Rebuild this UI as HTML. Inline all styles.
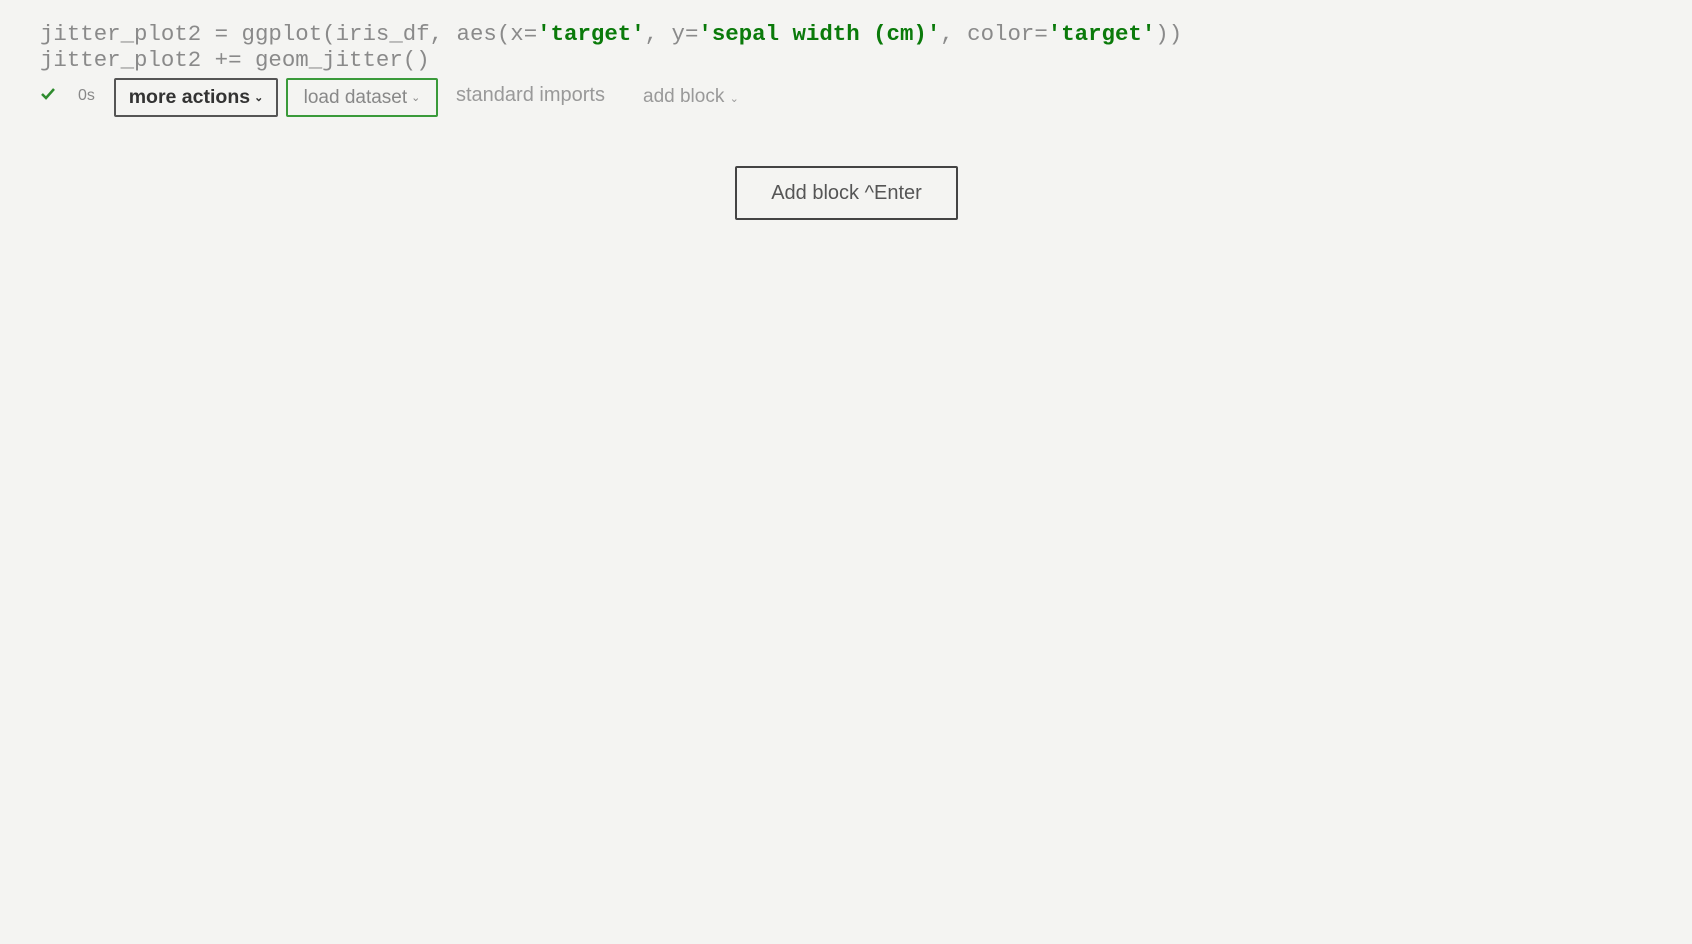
<!DOCTYPE html>
<html><head><meta charset="utf-8"><style>
body{margin:0;width:1692px;height:944px;background:#f4f4f2;position:relative;overflow:hidden;font-family:"Liberation Sans",sans-serif;}
.code{position:absolute;left:40px;top:21px;font-family:"Liberation Mono",monospace;font-size:22.4px;line-height:26px;color:#8a8a8a;white-space:pre;}
.s{color:#0a7a0a;font-weight:bold;}
.ab{position:absolute;box-sizing:border-box;font-size:19px;display:flex;align-items:center;justify-content:center;}
</style></head><body>
<div class="code">jitter_plot2 = ggplot(iris_df, aes(x=<span class="s">'target'</span>, y=<span class="s">'sepal width (cm)'</span>, color=<span class="s">'target'</span>))
jitter_plot2 += geom_jitter()</div>
<svg style="position:absolute;left:41px;top:88px" width="14" height="12"><path d="M1 6 L5 10 L13 1" stroke="#2e8b2e" stroke-width="2.5" fill="none"/></svg>
<div style="position:absolute;left:78px;top:87px;font-size:16px;color:#888">0s</div>
<div class="ab" style="left:114px;top:78px;width:164px;height:39px;border:2px solid #555;border-radius:2px;font-weight:bold;color:#333;font-size:19.5px">more actions <span style="font-size:11px;margin-left:4px">⌄</span></div>
<div class="ab" style="left:286px;top:78px;width:152px;height:39px;border:2px solid #3a9a3a;border-radius:2px;color:#888">load dataset <span style="font-size:11px;margin-left:4px">⌄</span></div>
<div style="position:absolute;left:456px;top:84px;font-size:20px;color:#999">standard imports</div>
<div style="position:absolute;left:643px;top:86px;font-size:19px;color:#999">add block <span style="font-size:11px">⌄</span></div>
<div class="ab" style="left:735px;top:166px;width:223px;height:54px;border:2px solid #444;border-radius:2px;color:#555;font-size:20px">Add block ^Enter</div>
</body></html>
